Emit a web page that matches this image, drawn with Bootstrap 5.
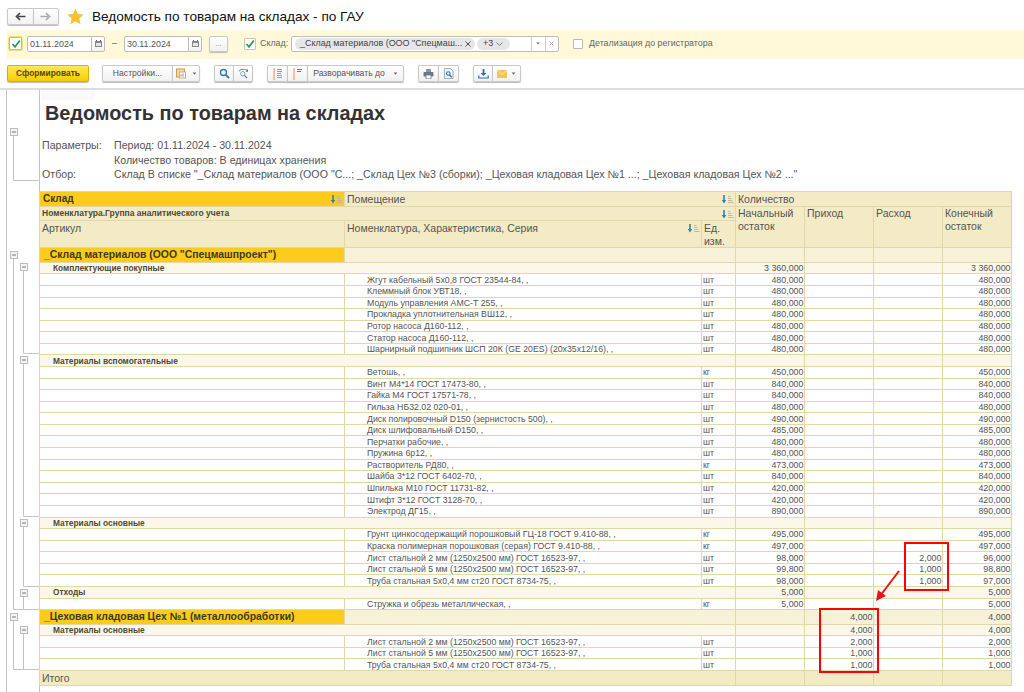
<!DOCTYPE html>
<html lang="ru">
<head>
<meta charset="utf-8">
<title>Ведомость по товарам на складах - по ГАУ</title>
<link href="https://cdn.jsdelivr.net/npm/bootstrap@5.3.0/dist/css/bootstrap.min.css" rel="stylesheet">
<style>
html,body{height:692px;overflow:hidden;background:#fff}
body{font-family:"Liberation Sans",Arial,sans-serif;color:#444;font-size:9px;line-height:1.1}
.sheet{position:relative;width:1024px;height:692px;overflow:hidden}
/* head */
.headbar{height:30px;padding:5px 0 3px 7px}
.headbar h1{font-size:13.6px;font-weight:400;color:#111;margin:0 0 0 8px;line-height:17px}
.tb{--bs-btn-padding-y:0;--bs-btn-padding-x:0;--bs-btn-font-size:8.6px;--bs-btn-border-radius:2px;--bs-btn-line-height:1;--bs-btn-color:#555;--bs-btn-bg:#fff;--bs-btn-border-color:#c9c9c9;height:17px;display:inline-flex;align-items:center;justify-content:center;background:linear-gradient(#fff,#f1f1f1);box-shadow:0 1px 1px #bbb}
.nb{width:26.5px}
.starico{margin-left:8px;flex:none}
/* filter */
.filterbar{height:29px;margin-left:7px;background:#fff8d9;padding:0 0 2px 1px;font-size:8.9px}
.chk{width:12px;height:12px;border:1px solid #b8b8b8;background:#fff;border-radius:1px;display:inline-flex;align-items:center;justify-content:center;flex:none}
.chk.on{outline:1px solid #f7dc7a;width:13px;height:13px;margin-left:1px;margin-right:1px}
.datebox{width:78px;height:16px;flex-wrap:nowrap}
.datebox .form-control{height:16px;min-height:0;padding:0 0 0 2px;font-size:8.9px;border-color:#bdbdbd;border-radius:2px 0 0 2px;color:#555;font-family:inherit;line-height:14px}
.datebox .tb{width:14px;height:16px;flex:none;border-radius:0 2px 2px 0;box-shadow:none;border-color:#bdbdbd}
.dash{width:19px;text-align:center;color:#555}
.morebtn{width:19px;height:16px;margin-left:7px;font-size:8px;color:#888}
.chk.sm{margin-left:16px;border-color:#c4c4c4}
.cap{margin-left:4px;width:31px;color:#666}
.msel{width:268px;height:16px;border:1px solid #bdbdbd;border-radius:2px;background:#fff;padding-left:3px;flex:none}
.chip{background:#e6e6e6;color:#444;border-radius:7px;height:12px;font-size:8.95px;font-weight:400;display:inline-flex;align-items:center;padding:0;white-space:nowrap}
.chip1{width:180px;padding-left:5px;gap:3px}
.chip3{width:33px;margin-left:2px;padding-left:6px;gap:3px}
.msel-gap{flex:1}
.msel-btn{width:13.5px;height:14px;border-left:1px solid #cfcfcf;display:flex;align-items:center;justify-content:center;flex:none}
.chk.free{margin-left:14px;width:10px;height:10px}
.det{margin-left:6px;color:#666}
/* toolbar */
.toolbar{height:29px;padding:6px 0 0 7px}
.go{width:82px;font-weight:700;--bs-btn-font-size:8.4px;border-color:#d9b100;background:linear-gradient(#ffe858,#f7cd00);color:#5a4600}
.ml13{margin-left:13px}
.ml14{margin-left:14px}
.w20{width:20px}.w21{width:21px}.w28{width:28px}.w29{width:29px}.w71{width:71px}.w97{width:97px}
/* report */
.report{height:604px;border-top:2px solid #ddd}
.tree{flex:none;display:block}
.rep-main{width:984px;position:relative}
.faint{height:10px;width:53px;background:#fafafa;margin-left:1px}
.rep-title{font-size:19.85px;font-weight:700;color:#333;margin:2px 0 0 5px;line-height:22px}
.rep-params{margin:14px 0 0 2px;font-size:10.65px;color:#555;height:53px;line-height:14.5px}
.rep-params dt{font-weight:400;width:72px;float:left;clear:left;margin:0}
.rep-params dd{margin:0 0 0 72px}
/* table */
.table.rpt{width:972px;table-layout:fixed;margin:0 0 0 -1px;border-collapse:collapse;font-size:8.75px;color:#555}
.table.rpt td,.table.rpt th{padding:0 2px;border:1px solid #e2d7a6;vertical-align:middle;line-height:10px;background:#fff;overflow:hidden;white-space:nowrap;box-shadow:none;font-weight:400;color:#555}
.table.rpt thead th{background:#f3ebc6;vertical-align:top;font-size:10.5px;line-height:12.6px;color:#555}
.table.rpt thead .srtc{position:relative}
.srtico{position:absolute;right:1px;top:3px}
.table.rpt thead th.kol1{background:#fccb1c;font-weight:700;font-size:10px;color:#3d3a22;height:15px;vertical-align:middle;padding-left:3px}
.table.rpt thead th.mid{height:15px;vertical-align:middle}
.table.rpt thead th.gr2{font-size:8.5px;font-weight:700;height:14px;vertical-align:middle;color:#4f4b33}
.table.rpt thead th.h3{height:27px;white-space:normal;padding-top:1px}
.table.rpt thead th.multi{white-space:normal;padding-top:0}
.table.rpt td.nm{padding-left:22px;font-size:8.75px}
.table.rpt td.un{padding-left:1px;font-size:8.75px}
.table.rpt td.nr{text-align:right;padding-right:.5px;font-size:8.9px}
.table.rpt tr.it td{height:11.58px}
.table.rpt tr.sub td{background:#fbf8ea;height:11.58px}
.table.rpt tr.sub td.lb{font-weight:700;font-size:8.35px;padding-left:13px;color:#4f4b33}
.table.rpt tr.grp td{background:#f7f1da;height:14.6px}
.table.rpt tr.grp td.lb{background:#fccb1c;font-weight:700;font-size:10.4px;color:#3d3a22;padding-left:4px}
.table.rpt tr.grp td.nr{font-size:8.9px}
.table.rpt tr.tot td{background:#f3ebc6;height:14.5px;font-size:10.5px}
.table.rpt tr.tot td.lb{padding-left:2px}
/* callouts */
.callout{position:absolute;border:2px solid #f00}
.c1{left:904px;top:542px;width:45px;height:49px}
.c2{left:819px;top:608px;width:60px;height:65px}
.arrow{position:absolute;left:870px;top:566px}
</style>
</head>
<body>
<svg width="0" height="0" class="position-absolute">
<symbol id="srt" viewBox="0 0 13 9"><path d="M3 0v5.500" stroke="#2f7fbf" stroke-width="1.600"/><path d="M.8 5h4.400L3 8.500z" fill="#2f7fbf"/><path d="M7 1.500h2.500M7 3.500h3.500M7 5.500h4.500M7 7.500h5.500" stroke="#b5b5a5" stroke-width=".9"/></symbol>
<symbol id="cal" viewBox="0 0 9 9"><rect x="1" y="2" width="7" height="6" fill="#888" rx=".5"/><rect x="2" y="4" width="5" height="3" fill="#e4e4e4"/><path d="M2.500 1v1.500M6.500 1v1.500" stroke="#666"/></symbol>
<symbol id="car" viewBox="0 0 6 4"><path d="M.5.500h5L3 3.500z" fill="#666"/></symbol>
<symbol id="tick" viewBox="0 0 10 10"><path d="M1.500 5l2.500 2.800L8.800 1.500" fill="none" stroke="#2e9a50" stroke-width="1.700"/></symbol>
</svg>
<div class="sheet">
  <header class="headbar d-flex align-items-center">
    <div class="btn-group">
      <button type="button" class="btn tb nb" aria-label="Назад"><svg width="11" height="9" viewBox="0 0 11 9"><path d="M10.500 4.500H3M5 1L1.500 4.500 5 8" fill="none" stroke="#444" stroke-width="1.700"/></svg></button>
      <button type="button" class="btn tb nb" aria-label="Вперёд"><svg width="11" height="9" viewBox="0 0 11 9"><path d="M.5 4.500H8M6 1l3.500 3.500L6 8" fill="none" stroke="#aaa" stroke-width="1.700"/></svg></button>
    </div>
    <svg class="starico" width="17" height="17" viewBox="0 0 17 17"><path d="M8.500.5l2.400 5.500 5.800.5-4.400 3.900 1.300 5.900-5.100-3.100-5.100 3.100 1.300-5.900L.3 6.500l5.800-.5z" fill="#f8c22c"/></svg>
    <h1>Ведомость по товарам на складах - по ГАУ</h1>
  </header>

  <section class="filterbar d-flex align-items-center">
    <span class="chk on"><svg width="10" height="10"><use href="#tick"/></svg></span>
    <div class="input-group datebox ms-1">
      <input class="form-control" value="01.11.2024" aria-label="Начало">
      <button type="button" class="btn tb" aria-label="Календарь"><svg width="9" height="9"><use href="#cal"/></svg></button>
    </div>
    <span class="dash">–</span>
    <div class="input-group datebox">
      <input class="form-control" value="30.11.2024" aria-label="Конец">
      <button type="button" class="btn tb" aria-label="Календарь"><svg width="9" height="9"><use href="#cal"/></svg></button>
    </div>
    <button type="button" class="btn tb morebtn">...</button>
    <span class="chk sm"><svg width="10" height="10"><use href="#tick"/></svg></span>
    <span class="cap">Склад:</span>
    <div class="msel d-flex align-items-center">
      <span class="badge chip chip1">_Склад материалов (ООО "Спецмаш... <svg width="6" height="6" viewBox="0 0 6 6"><path d="M.5.500l5 5M5.500.500l-5 5" stroke="#555"/></svg></span>
      <span class="badge chip chip3">+3 <svg width="7" height="4" viewBox="0 0 7 4"><path d="M.5.500L3.500 3.500 6.500.5" fill="none" stroke="#666" stroke-width=".8"/></svg></span>
      <span class="msel-gap"></span>
      <span class="msel-btn"><svg width="4" height="3"><use href="#car"/></svg></span>
      <span class="msel-btn"><svg width="5" height="5" viewBox="0 0 5 5"><path d="M.5.500l4 4M4.500.500l-4 4" stroke="#aaa"/></svg></span>
    </div>
    <span class="chk free"></span>
    <span class="det">Детализация до регистратора</span>
  </section>

  <nav class="toolbar d-flex align-items-start">
    <button type="button" class="btn tb go">Сформировать</button>
    <div class="btn-group ml13">
      <button type="button" class="btn tb w71">Настройки...</button>
      <button type="button" class="btn tb w28" aria-label="Варианты"><svg width="12" height="11" viewBox="0 0 12 11"><rect x=".5" y="1" width="8" height="8" fill="#f3d9a0" stroke="#d09a45"/><rect x="3.500" y="4" width="6" height="6" fill="#fff" stroke="#b0b0b0"/><path d="M5 8.500v-2M7 8.500V5.500" stroke="#d06a50"/></svg><svg class="ms-1" width="5" height="3"><use href="#car"/></svg></button>
    </div>
    <div class="btn-group ml14">
      <button type="button" class="btn tb w20" aria-label="Найти"><svg width="11" height="11" viewBox="0 0 11 11"><circle cx="4.500" cy="4.500" r="3" fill="none" stroke="#2f78b0" stroke-width="1.400"/><path d="M6.800 6.800L10 10" stroke="#2f78b0" stroke-width="1.800"/></svg></button>
      <button type="button" class="btn tb w20" aria-label="Найти далее"><svg width="11" height="11" viewBox="0 0 11 11"><path d="M1 3.200C3 .8 7 .8 9.500 2.500" fill="none" stroke="#4a8ab8"/><path d="M10 .8v3H7.500z" fill="#2f78b0"/><circle cx="4.800" cy="5.800" r="2.200" fill="none" stroke="#7ba3c0"/><path d="M6.500 7.500L9 10" stroke="#4a8ab8" stroke-width="1.300"/></svg></button>
    </div>
    <div class="btn-group ml14">
      <button type="button" class="btn tb w21" aria-label="Развернуть"><svg width="11" height="12" viewBox="0 0 11 12"><path d="M2 0v12" stroke="#f09a70" stroke-width="1.200"/><path d="M5 1.500h5M5 3.500h5M5 5.500h4M5 7.500h5M5 9.500h5" stroke="#9a9a9a" stroke-width="1.100"/></svg></button>
      <button type="button" class="btn tb w21" aria-label="Свернуть"><svg width="11" height="12" viewBox="0 0 11 12"><path d="M2 0v12" stroke="#f09a70" stroke-width="1.200"/><path d="M5 1.500h5M5 3.500h4" stroke="#777" stroke-width="1.100"/></svg></button>
      <button type="button" class="btn tb w97">Разворачивать до <svg class="ms-2" width="5" height="3"><use href="#car"/></svg></button>
    </div>
    <div class="btn-group ml14">
      <button type="button" class="btn tb w21" aria-label="Печать"><svg width="11" height="10" viewBox="0 0 11 10"><rect x="3" y="0" width="5" height="3" fill="#8a96a3"/><rect x=".5" y="3" width="10" height="4.500" rx="1" fill="#6a7885"/><rect x="3" y="6" width="5" height="4" fill="#fff" stroke="#6a7885" stroke-width=".8"/></svg></button>
      <button type="button" class="btn tb w21" aria-label="Просмотр"><svg width="10" height="11" viewBox="0 0 10 11"><path d="M.5.500h6l2.500 2.500v7.500H.5z" fill="#eef3f7" stroke="#9fb2c2"/><circle cx="4.300" cy="5.500" r="1.800" fill="none" stroke="#2f78b0" stroke-width="1.100"/><path d="M5.500 7L7.800 9.300" stroke="#2f78b0" stroke-width="1.400"/></svg></button>
    </div>
    <div class="btn-group ml14">
      <button type="button" class="btn tb w20" aria-label="Сохранить"><svg width="11" height="10" viewBox="0 0 11 10"><path d="M5.500 0v5" stroke="#2a6fa8" stroke-width="1.800"/><path d="M2.500 4h6l-3 3z" fill="#2a6fa8"/><path d="M.8 6.500v2.500h9.400V6.500" fill="none" stroke="#2a6fa8" stroke-width="1.200"/></svg></button>
      <button type="button" class="btn tb w29" aria-label="Отправить"><svg width="10" height="8" viewBox="0 0 10 8"><rect width="10" height="8" fill="#eec65a"/><path d="M0 0l5 4.500L10 0" fill="none" stroke="#fbe9b0"/></svg><svg class="ms-1" width="5" height="3"><use href="#car"/></svg></button>
    </div>
  </nav>

  <main class="report d-flex">
    <svg class="tree" width="40" height="602" viewBox="0 90 40 602" fill="none" stroke="#c4c4c4">
      <path d="M6.500 90v602M39.500 90v602"/>
      <path d="M13.500 135v45.500H39M13.500 258v351.500H39M23.500 270v83.500H39M23.500 363v153.500H39M23.500 526v60.500H39M23.500 596v13.500M13.500 620v49.500H39M23.500 633v36.500"/>
      <g fill="#f3f3f3" stroke="#bdbdbd">
        <rect x="10.500" y="128.500" width="7" height="7"/><rect x="10.500" y="251.500" width="7" height="7"/><rect x="20.500" y="263.500" width="7" height="7"/><rect x="20.500" y="356.500" width="7" height="7"/><rect x="20.500" y="519.500" width="7" height="7"/><rect x="20.500" y="589.500" width="7" height="7"/><rect x="10.500" y="613.500" width="7" height="7"/><rect x="20.500" y="626.500" width="7" height="7"/>
      </g>
      <path d="M12 132h4M12 255h4M22 267h4M22 360h4M22 523h4M22 593h4M12 617h4M22 630h4" stroke="#777"/>
    </svg>
    <div class="rep-main">
      <div class="faint"></div>
      <h2 class="rep-title">Ведомость по товарам на складах</h2>
      <dl class="rep-params">
        <dt>Параметры:</dt><dd>Период: 01.11.2024 - 30.11.2024</dd>
        <dd>Количество товаров: В единицах хранения</dd>
        <dt>Отбор:</dt><dd>Склад В списке "_Склад материалов (ООО "С...; _Склад Цех №3 (сборки); _Цеховая кладовая Цех №1 ...; _Цеховая кладовая Цех №2 ..."</dd>
      </dl>
      <table class="table rpt">
        <colgroup><col style="width:305px"><col style="width:357px"><col style="width:34px"><col style="width:69px"><col style="width:69px"><col style="width:69px"><col style="width:69px"></colgroup>
        <thead>
          <tr><th class="kol1 srtc">Склад<svg class="srtico" width="13" height="9"><use href="#srt"/></svg></th><th class="mid srtc" colspan="2">Помещение<svg class="srtico" width="13" height="9"><use href="#srt"/></svg></th><th class="mid" colspan="4">Количество</th></tr>
          <tr><th class="gr2 srtc" colspan="3">Номенклатура.Группа аналитического учета<svg class="srtico" width="13" height="9"><use href="#srt"/></svg></th><th class="multi" rowspan="2">Начальный остаток</th><th class="multi" rowspan="2">Приход</th><th class="multi" rowspan="2">Расход</th><th class="multi" rowspan="2">Конечный остаток</th></tr>
          <tr><th class="h3">Артикул</th><th class="h3 srtc">Номенклатура, Характеристика, Серия<svg class="srtico" width="13" height="9"><use href="#srt"/></svg></th><th class="h3">Ед. изм.</th></tr>
        </thead>
        <tbody>
          <tr class="grp"><td class="lb">_Склад материалов (ООО "Спецмашпроект")</td><td colspan="2"></td><td></td><td></td><td></td><td></td></tr>
          <tr class="sub"><td class="lb" colspan="3">Комплектующие покупные</td><td class="nr">3 360,000</td><td></td><td></td><td class="nr">3 360,000</td></tr>
          <tr class="it"><td></td><td class="nm">Жгут кабельный 5х0,8 ГОСТ 23544-84, ,</td><td class="un">шт</td><td class="nr">480,000</td><td></td><td></td><td class="nr">480,000</td></tr>
          <tr class="it"><td></td><td class="nm">Клеммный блок УВТ18, ,</td><td class="un">шт</td><td class="nr">480,000</td><td></td><td></td><td class="nr">480,000</td></tr>
          <tr class="it"><td></td><td class="nm">Модуль управления АМС-Т 255, ,</td><td class="un">шт</td><td class="nr">480,000</td><td></td><td></td><td class="nr">480,000</td></tr>
          <tr class="it"><td></td><td class="nm">Прокладка уплотнительная ВШ12, ,</td><td class="un">шт</td><td class="nr">480,000</td><td></td><td></td><td class="nr">480,000</td></tr>
          <tr class="it"><td></td><td class="nm">Ротор насоса Д160-112, ,</td><td class="un">шт</td><td class="nr">480,000</td><td></td><td></td><td class="nr">480,000</td></tr>
          <tr class="it"><td></td><td class="nm">Статор насоса Д160-112, ,</td><td class="un">шт</td><td class="nr">480,000</td><td></td><td></td><td class="nr">480,000</td></tr>
          <tr class="it"><td></td><td class="nm">Шарнирный подшипник ШСП 20К (GE 20ES) (20х35х12/16), ,</td><td class="un">шт</td><td class="nr">480,000</td><td></td><td></td><td class="nr">480,000</td></tr>
          <tr class="sub"><td class="lb" colspan="3">Материалы вспомогательные</td><td></td><td></td><td></td><td></td></tr>
          <tr class="it"><td></td><td class="nm">Ветошь, ,</td><td class="un">кг</td><td class="nr">450,000</td><td></td><td></td><td class="nr">450,000</td></tr>
          <tr class="it"><td></td><td class="nm">Винт М4*14 ГОСТ 17473-80, ,</td><td class="un">шт</td><td class="nr">840,000</td><td></td><td></td><td class="nr">840,000</td></tr>
          <tr class="it"><td></td><td class="nm">Гайка М4 ГОСТ 17571-78, ,</td><td class="un">шт</td><td class="nr">840,000</td><td></td><td></td><td class="nr">840,000</td></tr>
          <tr class="it"><td></td><td class="nm">Гильза НБ32.02 020-01, ,</td><td class="un">шт</td><td class="nr">480,000</td><td></td><td></td><td class="nr">480,000</td></tr>
          <tr class="it"><td></td><td class="nm">Диск полировочный D150 (зернистость 500), ,</td><td class="un">шт</td><td class="nr">490,000</td><td></td><td></td><td class="nr">490,000</td></tr>
          <tr class="it"><td></td><td class="nm">Диск шлифовальный D150, ,</td><td class="un">шт</td><td class="nr">485,000</td><td></td><td></td><td class="nr">485,000</td></tr>
          <tr class="it"><td></td><td class="nm">Перчатки рабочие, ,</td><td class="un">шт</td><td class="nr">480,000</td><td></td><td></td><td class="nr">480,000</td></tr>
          <tr class="it"><td></td><td class="nm">Пружина 6р12, ,</td><td class="un">шт</td><td class="nr">480,000</td><td></td><td></td><td class="nr">480,000</td></tr>
          <tr class="it"><td></td><td class="nm">Растворитель РД80, ,</td><td class="un">кг</td><td class="nr">473,000</td><td></td><td></td><td class="nr">473,000</td></tr>
          <tr class="it"><td></td><td class="nm">Шайба 3*12 ГОСТ 6402-70, ,</td><td class="un">шт</td><td class="nr">840,000</td><td></td><td></td><td class="nr">840,000</td></tr>
          <tr class="it"><td></td><td class="nm">Шпилька М10 ГОСТ 11731-82, ,</td><td class="un">шт</td><td class="nr">420,000</td><td></td><td></td><td class="nr">420,000</td></tr>
          <tr class="it"><td></td><td class="nm">Штифт 3*12 ГОСТ 3128-70, ,</td><td class="un">шт</td><td class="nr">420,000</td><td></td><td></td><td class="nr">420,000</td></tr>
          <tr class="it"><td></td><td class="nm">Электрод ДГ15, ,</td><td class="un">шт</td><td class="nr">890,000</td><td></td><td></td><td class="nr">890,000</td></tr>
          <tr class="sub"><td class="lb" colspan="3">Материалы основные</td><td></td><td></td><td></td><td></td></tr>
          <tr class="it"><td></td><td class="nm">Грунт цинкосодержащий порошковый ГЦ-18 ГОСТ 9.410-88, ,</td><td class="un">кг</td><td class="nr">495,000</td><td></td><td></td><td class="nr">495,000</td></tr>
          <tr class="it"><td></td><td class="nm">Краска полимерная порошковая (серая) ГОСТ 9.410-88, ,</td><td class="un">кг</td><td class="nr">497,000</td><td></td><td></td><td class="nr">497,000</td></tr>
          <tr class="it"><td></td><td class="nm">Лист стальной 2 мм (1250х2500 мм) ГОСТ 16523-97, ,</td><td class="un">шт</td><td class="nr">98,000</td><td></td><td class="nr">2,000</td><td class="nr">96,000</td></tr>
          <tr class="it"><td></td><td class="nm">Лист стальной 5 мм (1250х2500 мм) ГОСТ 16523-97, ,</td><td class="un">шт</td><td class="nr">99,800</td><td></td><td class="nr">1,000</td><td class="nr">98,800</td></tr>
          <tr class="it"><td></td><td class="nm">Труба стальная 5х0,4 мм ст20 ГОСТ 8734-75, ,</td><td class="un">шт</td><td class="nr">98,000</td><td></td><td class="nr">1,000</td><td class="nr">97,000</td></tr>
          <tr class="sub"><td class="lb" colspan="3">Отходы</td><td class="nr">5,000</td><td></td><td></td><td class="nr">5,000</td></tr>
          <tr class="it"><td></td><td class="nm">Стружка и обрезь металлическая, ,</td><td class="un">кг</td><td class="nr">5,000</td><td></td><td></td><td class="nr">5,000</td></tr>
          <tr class="grp"><td class="lb">_Цеховая кладовая Цех №1 (металлообработки)</td><td colspan="2"></td><td></td><td class="nr">4,000</td><td></td><td class="nr">4,000</td></tr>
          <tr class="sub"><td class="lb" colspan="3">Материалы основные</td><td></td><td class="nr">4,000</td><td></td><td class="nr">4,000</td></tr>
          <tr class="it"><td></td><td class="nm">Лист стальной 2 мм (1250х2500 мм) ГОСТ 16523-97, ,</td><td class="un">шт</td><td></td><td class="nr">2,000</td><td></td><td class="nr">2,000</td></tr>
          <tr class="it"><td></td><td class="nm">Лист стальной 5 мм (1250х2500 мм) ГОСТ 16523-97, ,</td><td class="un">шт</td><td></td><td class="nr">1,000</td><td></td><td class="nr">1,000</td></tr>
          <tr class="it"><td></td><td class="nm">Труба стальная 5х0,4 мм ст20 ГОСТ 8734-75, ,</td><td class="un">шт</td><td></td><td class="nr">1,000</td><td></td><td class="nr">1,000</td></tr>
          <tr class="tot"><td class="lb" colspan="3">Итого</td><td></td><td></td><td></td><td></td></tr>
        </tbody>
      </table>
    </div>
  </main>
  <div class="callout c1"></div>
  <div class="callout c2"></div>
  <svg class="arrow" width="34" height="38" viewBox="0 0 34 38"><path d="M29 5L10 30" stroke="#e8141c" stroke-width="2"/><path d="M6 35l2-11 8 6z" fill="#e8141c"/></svg>
</div>
<script src="https://cdn.jsdelivr.net/npm/bootstrap@5.3.0/dist/js/bootstrap.bundle.min.js"></script>
</body>
</html>
